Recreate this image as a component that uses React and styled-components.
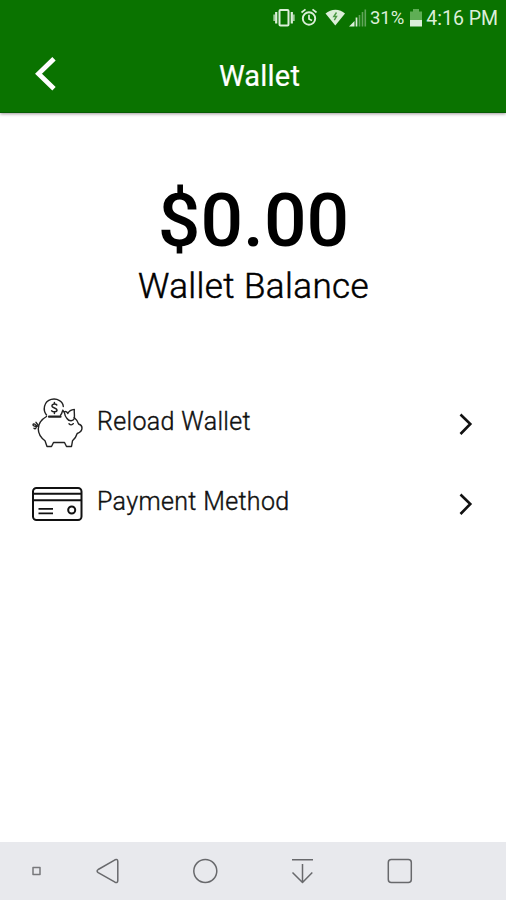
import React from "react";
import styled, { createGlobalStyle } from "styled-components";

const GlobalStyle = createGlobalStyle`
  * {
    box-sizing: border-box;
  }

  body {
    margin: 0;
    background: #fff;
    font-family: Roboto, "Liberation Sans", sans-serif;
  }
`;

const Screen = styled.div`
  display: flex;
  flex-direction: column;
  width: 100%;
  height: 100vh;
  overflow: hidden;
  background: #fff;
`;

const Header = styled.header`
  flex: none;
  height: 113px;
  background: #0a7300;
  color: #fff;
  border-bottom: 1px solid #075c04;
  box-shadow: 0 1px 3px rgba(70, 50, 60, 0.5);
`;

const StatusBar = styled.div`
  display: flex;
  justify-content: flex-end;
  height: 37px;
  padding-right: 8px;
  color: #dcefd9;
`;

const StatusIcons = styled.svg`
  width: 96px;
  height: 37px;
  margin-right: 2px;
`;

const StatusText = styled.span`
  font-size: ${(props) => props.$size}px;
  line-height: 37px;
  white-space: nowrap;
`;

const Battery = styled.svg`
  width: 12px;
  height: 37px;
  margin: 0 4px 0 6px;
`;

const TitleBar = styled.div`
  display: grid;
  grid-template-columns: 80px 1fr 80px;
  align-items: center;
  height: 75px;
  padding-left: 13px;
`;

const BackButton = styled.button`
  display: flex;
  width: 64px;
  height: 64px;
  padding: 0;
  border: 0;
  background: none;
  color: inherit;
`;

const Title = styled.h1`
  margin: 2px 0 0;
  font-size: 29px;
  font-weight: 400;
  line-height: 40px;
  letter-spacing: 0.2px;
  text-align: center;
  -webkit-text-stroke: 0.2px #fff;
`;

const Content = styled.main`
  flex: 1;
  color: #000;
`;

const Balance = styled.section`
  display: flex;
  flex-direction: column;
  align-items: center;
  padding-top: 64px;
`;

const Amount = styled.div`
  padding-left: 1px;
  font-size: 75px;
  font-weight: 500;
  line-height: 87px;
`;

const Caption = styled.div`
  padding: 2px 0 0 1px;
  font-size: 35px;
  line-height: 42px;
  font-weight: 300;
  letter-spacing: 0.4px;
  -webkit-text-stroke: 0.5px #000;
`;

const Menu = styled.nav`
  display: flex;
  flex-direction: column;
  padding: 76px 33px 0 31px;
`;

const MenuItem = styled.div`
  display: flex;
  align-items: center;
  height: 80px;
`;

const ItemIcon = styled.svg`
  flex: none;
  width: 54px;
  height: 54px;
`;

const ItemLabel = styled.span`
  flex: 1;
  padding: 0 0 5px 12px;
  font-size: 25px;
  font-weight: 300;
  line-height: 32px;
  letter-spacing: 0.35px;
  color: #111;
  -webkit-text-stroke: 0.4px #111;
`;

const Chevron = styled.svg`
  width: 14px;
  height: 24px;
`;

const NavBar = styled.footer`
  display: flex;
  align-items: center;
  flex: none;
  height: 58px;
  padding-left: 30px;
  background: #e8e9ed;
`;

const NavIcons = styled.svg`
  width: 384px;
  height: 58px;
`;

function PiggyBank() {
  return (
    <ItemIcon viewBox="0 0 54 54" fill="none" stroke="#222" strokeWidth="1.4" strokeLinecap="round" strokeLinejoin="round">
      <path d="M15.5 18C11.5 13 12.8 4.5 20.2 2.4C26.5 1 32 4.5 32.3 9.5" />
      <path d="M31.5 14C31 16 30.5 17.2 29.5 18.2" />
      <path d="M25.8 7.9C24.6 6.5 20.9 6.7 20.9 9.1C20.9 11.4 26 10.7 26 13C26 15.2 22 15.3 20.6 13.7M23.4 5.6V7.1M23.4 14.8V16.4" strokeWidth="1.5" />
      <path d="M18 19.7H29.5" strokeWidth="2.2" />
      <path d="M15.5 19.5C10.2 22.5 7.3 27 7.3 32C7.3 37 10 40.8 14 43.8L16 49.5H20.5L22.5 45.5H33.5L35.5 49.5H40.5L41.5 43.8C44 41.5 45.5 39 46.2 36.5C49.5 35.3 51 33.5 51 31C51 29 50 27.8 47.6 27C46.6 24.2 45 22 43.2 20.5" />
      <path d="M31.8 13.2L33.5 16M33.4 14.8C34.8 13.8 36.3 15.2 36.8 16.5C38 14 40.2 12.7 43.3 12.4C43 15.5 43.8 18.5 43.3 21.2C42.5 24.5 38 24.5 36 21.5C34.5 19.7 33.8 18.8 33.5 16" />
      <path d="M38 26.7C39.3 28.2 41.3 28.2 42.3 26.7" />
      <path d="M7.3 28.8C4.5 30 1.8 29 2 27.6C2.5 26 5.8 27.5 5.3 30C5 32.3 3.5 31.8 3 31.3M5 25.3L7 28" />
    </ItemIcon>
  );
}

function PaymentCard() {
  return (
    <ItemIcon viewBox="0 0 54 54" fill="none" stroke="#111" strokeWidth="2">
      <rect x="2" y="11" width="48.5" height="32" rx="3.5" />
      <path d="M2 16.8H50.5M2 23.2H50.5" />
      <path d="M7.5 31.8H22M7.5 36.3H22" strokeWidth="1.7" />
      <circle cx="40.7" cy="33" r="3.5" />
    </ItemIcon>
  );
}

const menuItems = [
  { label: "Reload Wallet", icon: <PiggyBank /> },
  { label: "Payment Method", icon: <PaymentCard /> },
];

function App() {
  return (
    <Screen>
      <GlobalStyle />
      <Header>
        <StatusBar>
          <StatusIcons viewBox="0 0 96 37" fill="none" stroke="currentColor">
            {/* vibrate */}
            <rect x="7.5" y="10" width="9" height="15.5" rx="1" strokeWidth="2" />
            <path d="M4.2 12V23.5M19.8 12V23.5" strokeWidth="2.2" />
            <path d="M2.2 14.5V21M21.8 14.5V21" strokeWidth="1.8" opacity="0.7" />
            {/* alarm */}
            <circle cx="37" cy="18.5" r="6.2" strokeWidth="1.9" />
            <path d="M37 14.8V19L40 20.5M29.5 12.5L33.5 9.3M44.5 12.5L40.5 9.3" strokeWidth="1.7" />
            {/* wifi */}
            <path d="M53.5 13.5C59 8.4 68 8.4 73 13.5L63.3 25.5Z" fill="currentColor" stroke="none" />
            <path d="M64.5 12.5L61.8 16.5H64.5L62.3 20.2" stroke="#4d9a46" strokeWidth="1.4" />
            {/* signal */}
            <path d="M77 26.5L82.5 21V26.5Z" fill="currentColor" stroke="none" />
            <path d="M84.5 26.5V17.5" strokeWidth="1.7" />
            <path d="M87.5 26.5V15M90.5 26.5V12M93.3 26.5V9.5" stroke="#61a55a" strokeWidth="1.6" />
          </StatusIcons>
          <StatusText $size={18.5}>31%</StatusText>
          <Battery viewBox="0 0 12 37">
            <path d="M0 11.5H3V9H9V11.5H12V20H0Z" fill="#5fae55" />
            <path d="M0 20H12V26.5H0Z" fill="#dcefd9" />
          </Battery>
          <StatusText $size={19.5}>4:16 PM</StatusText>
        </StatusBar>
        <TitleBar>
          <BackButton aria-label="Back">
            <svg width="64" height="64" viewBox="0 0 64 64" fill="none" stroke="currentColor" strokeWidth="4.8">
              <path d="M41 15.8L25.5 30.8L41 45.8" />
            </svg>
          </BackButton>
          <Title>Wallet</Title>
        </TitleBar>
      </Header>
      <Content>
        <Balance>
          <Amount>$0.00</Amount>
          <Caption>Wallet Balance</Caption>
        </Balance>
        <Menu>
          {menuItems.map((item) => (
            <MenuItem key={item.label}>
              {item.icon}
              <ItemLabel>{item.label}</ItemLabel>
              <Chevron viewBox="0 0 14 24" fill="none" stroke="#111" strokeWidth="2.6">
                <path d="M1.5 2.5L11.3 12L1.5 22" />
              </Chevron>
            </MenuItem>
          ))}
        </Menu>
      </Content>
      <NavBar>
        <NavIcons viewBox="0 0 384 58" fill="none" stroke="#68696c" strokeWidth="1.5" strokeLinejoin="round">
          <rect x="3" y="25.5" width="7" height="7" stroke="#77787b" />
          <path d="M68.2 27.5L85 17.8Q87.8 16.5 87.8 19.5V38.5Q87.8 41.5 85 40.2L68.2 30.7Q66 29 68.2 27.5Z" />
          <circle cx="175.3" cy="29" r="11.5" />
          <path d="M262 17.7H283M272.5 22V40.5M262.5 30.5L272.5 40.5L282.3 30.5" />
          <rect x="358.3" y="17.5" width="23" height="23" rx="3" />
        </NavIcons>
      </NavBar>
    </Screen>
  );
}

export default App;
